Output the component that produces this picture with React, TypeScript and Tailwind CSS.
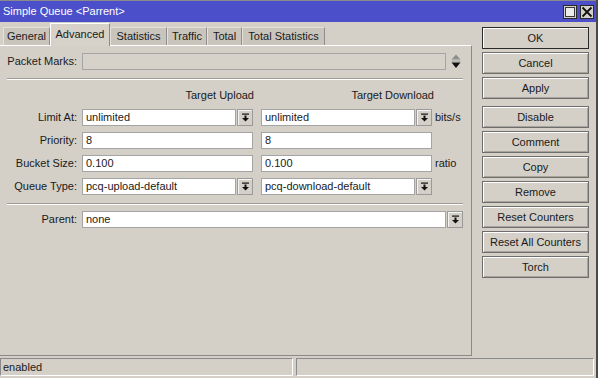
import React from "react";

const DropIcon = () => (
  <svg width="9" height="9" viewBox="0 0 9 9">
    <rect x="1" y="0.5" width="7" height="1.2" fill="#111" />
    <rect x="3.5" y="2.5" width="2" height="2.5" fill="#111" />
    <polygon points="1,5 8,5 4.5,8.5" fill="#111" />
  </svg>
);

const DropBtn = () => (
  <div className="w-[16px] h-[17px] ml-[1px] flex items-center justify-center bg-[#d4d0c8] border border-[#9a9a9a] shadow-[inset_1px_1px_0_#f4f4f4]">
    <DropIcon />
  </div>
);

const Input = ({ value, w }: { value: string; w: number }) => (
  <div
    className="h-[17px] bg-white border border-[#a4a4a4] pl-[3px] flex items-center text-[#1a1a1a] leading-none"
    style={{ width: w }}
  >
    {value}
  </div>
);

const Label = ({ children }: { children: React.ReactNode }) => (
  <span className="w-[70px] text-right text-[#1a1a1a] shrink-0 whitespace-nowrap">{children}</span>
);

const Sep = () => <div className="h-[2px] border-t border-[#a09c94] border-b border-b-white" />;

const tabs = [
  { t: "General", w: 47 },
  { t: "Advanced", w: 60, active: true },
  { t: "Statistics", w: 57 },
  { t: "Traffic", w: 40 },
  { t: "Total", w: 35 },
  { t: "Total Statistics", w: 83 },
];

const buttons = [
  "OK",
  "Cancel",
  "Apply",
  "Disable",
  "Comment",
  "Copy",
  "Remove",
  "Reset Counters",
  "Reset All Counters",
  "Torch",
];

export default function App() {
  return (
    <div className="w-[598px] h-[378px] bg-[#d4d0c8] flex flex-col font-['Liberation_Sans',Arial,sans-serif] text-[11px] text-[#1a1a1a] border-r-2 border-[#4a4a4a] overflow-hidden">
      {/* Title bar */}
      <div className="h-[22px] shrink-0 bg-[#4b4fc9] border-t border-[#8a8a8a] flex items-center justify-between pl-[3px] pr-[2px]">
        <span className="text-white text-[11px] leading-none">Simple Queue &lt;Parrent&gt;</span>
        <div className="flex gap-[3px]">
          <div className="w-[14px] h-[14px] bg-[#d4d0c8] border border-[#2a2a2a] flex items-center justify-center">
            <div className="w-[10px] h-[10px] border-[1.5px] border-[#3a3a3a] bg-[#ececec]" />
          </div>
          <div className="w-[14px] h-[14px] bg-[#d4d0c8] border border-[#2a2a2a] flex items-center justify-center">
            <svg width="12" height="12" viewBox="0 0 12 12">
              <path d="M1.5 1.5 L10.5 10.5 M10.5 1.5 L1.5 10.5" stroke="#111" strokeWidth="1.8" />
            </svg>
          </div>
        </div>
      </div>

      {/* Body */}
      <div className="flex h-[335px] shrink-0">
        <div className="w-[472px] flex flex-col">
          <div className="h-[23px] flex items-end pl-[3px] shrink-0">
            {tabs.map((tb) =>
              tb.active ? (
                <div
                  key={tb.t}
                  className="h-[23px] -mb-px relative z-10 bg-[#d6d2ca] border-t border-l border-white border-r border-r-[#8a8a8a] flex items-center justify-center pb-[2px]"
                  style={{ width: tb.w }}
                >
                  {tb.t}
                </div>
              ) : (
                <div
                  key={tb.t}
                  className="h-[18px] bg-[#c9c5bd] border-t border-l border-[#e4e1db] border-r border-r-[#8e8e8e] flex items-center justify-center"
                  style={{ width: tb.w }}
                >
                  {tb.t}
                </div>
              )
            )}
          </div>
          <div className="flex-1 border-t border-white border-r border-r-[#8a8a8a] border-b border-b-[#8a8a8a] mb-[1px] pl-[7px] pr-[7px] pt-[7px] flex flex-col">
            {/* Packet Marks */}
            <div className="flex items-center h-[17px]">
              <Label>Packet Marks:</Label>
              <div className="ml-[5px] w-[364px] h-[17px] border border-[#a4a4a4] bg-[#d6d2ca]" />
              <div className="ml-[5px] w-[10px] flex justify-center">
                <svg width="10" height="15" viewBox="0 0 10 15">
                  <polygon points="5,0.5 9.5,5.5 0.5,5.5" fill="#8f8f8f" />
                  <rect x="0.5" y="6.5" width="9" height="1.2" fill="#a8a8a8" />
                  <polygon points="0.5,8.5 9.5,8.5 5,14" fill="#111" />
                </svg>
              </div>
            </div>
            <div className="mt-[8px] mr-[1px]">
              <Sep />
            </div>
            {/* header */}
            <div className="flex items-center h-[14px] mt-[8px]">
              <span className="w-[70px]" />
              <div className="ml-[5px] w-[172px] text-right">Target Upload</div>
              <div className="ml-[8px] w-[172px] text-right">Target Download</div>
            </div>
            {/* Limit At */}
            <div className="flex items-center h-[17px] mt-[7px]">
              <Label>Limit At:</Label>
              <div className="ml-[5px] flex">
                <Input value="unlimited" w={154} />
                <DropBtn />
              </div>
              <div className="ml-[8px] flex">
                <Input value="unlimited" w={154} />
                <DropBtn />
              </div>
              <span className="ml-[3px]">bits/s</span>
            </div>
            {/* Priority */}
            <div className="flex items-center h-[17px] mt-[6px]">
              <Label>Priority:</Label>
              <div className="ml-[5px] flex">
                <Input value="8" w={171} />
              </div>
              <div className="ml-[8px] flex">
                <Input value="8" w={171} />
              </div>
            </div>
            {/* Bucket Size */}
            <div className="flex items-center h-[17px] mt-[6px]">
              <Label>Bucket Size:</Label>
              <div className="ml-[5px] flex">
                <Input value="0.100" w={171} />
              </div>
              <div className="ml-[8px] flex">
                <Input value="0.100" w={171} />
              </div>
              <span className="ml-[3px]">ratio</span>
            </div>
            {/* Queue Type */}
            <div className="flex items-center h-[17px] mt-[6px]">
              <Label>Queue Type:</Label>
              <div className="ml-[5px] flex">
                <Input value="pcq-upload-default" w={154} />
                <DropBtn />
              </div>
              <div className="ml-[8px] flex">
                <Input value="pcq-download-default" w={154} />
                <DropBtn />
              </div>
            </div>
            <div className="mt-[8px] mr-[1px]">
              <Sep />
            </div>
            {/* Parent */}
            <div className="flex items-center h-[17px] mt-[6px]">
              <Label>Parent:</Label>
              <div className="ml-[5px] flex">
                <Input value="none" w={364} />
                <DropBtn />
              </div>
            </div>
          </div>
        </div>

        {/* Right buttons */}
        <div className="ml-[10px] w-[107px] pt-[5px] flex flex-col">
          {buttons.map((b) => (
            <div
              key={b}
              className={`h-[22px] flex items-center justify-center bg-[#d4d0c8] ${
                b === "OK"
                  ? "border border-[#2a2a2a] shadow-[inset_1px_1px_0_#ffffff]"
                  : "border border-[#6e6e6e] shadow-[inset_1px_1px_0_#ffffff,inset_-1px_-1px_0_#a8a49c]"
              } ${b === "Apply" ? "mb-[7px]" : "mb-[3px]"}`}
            >
              {b}
            </div>
          ))}
        </div>
      </div>

      {/* Status bar */}
      <div className="flex-1 flex gap-[3px] pt-[1px] pr-[2px]">
        <div className="w-[293px] h-[18px] border-t border-l border-[#8a8a8a] border-b border-r border-b-white border-r-white flex items-center pl-[2px]">
          enabled
        </div>
        <div className="flex-1 h-[18px] border-t border-l border-[#8a8a8a] border-b border-r border-b-white border-r-white" />
      </div>
    </div>
  );
}
